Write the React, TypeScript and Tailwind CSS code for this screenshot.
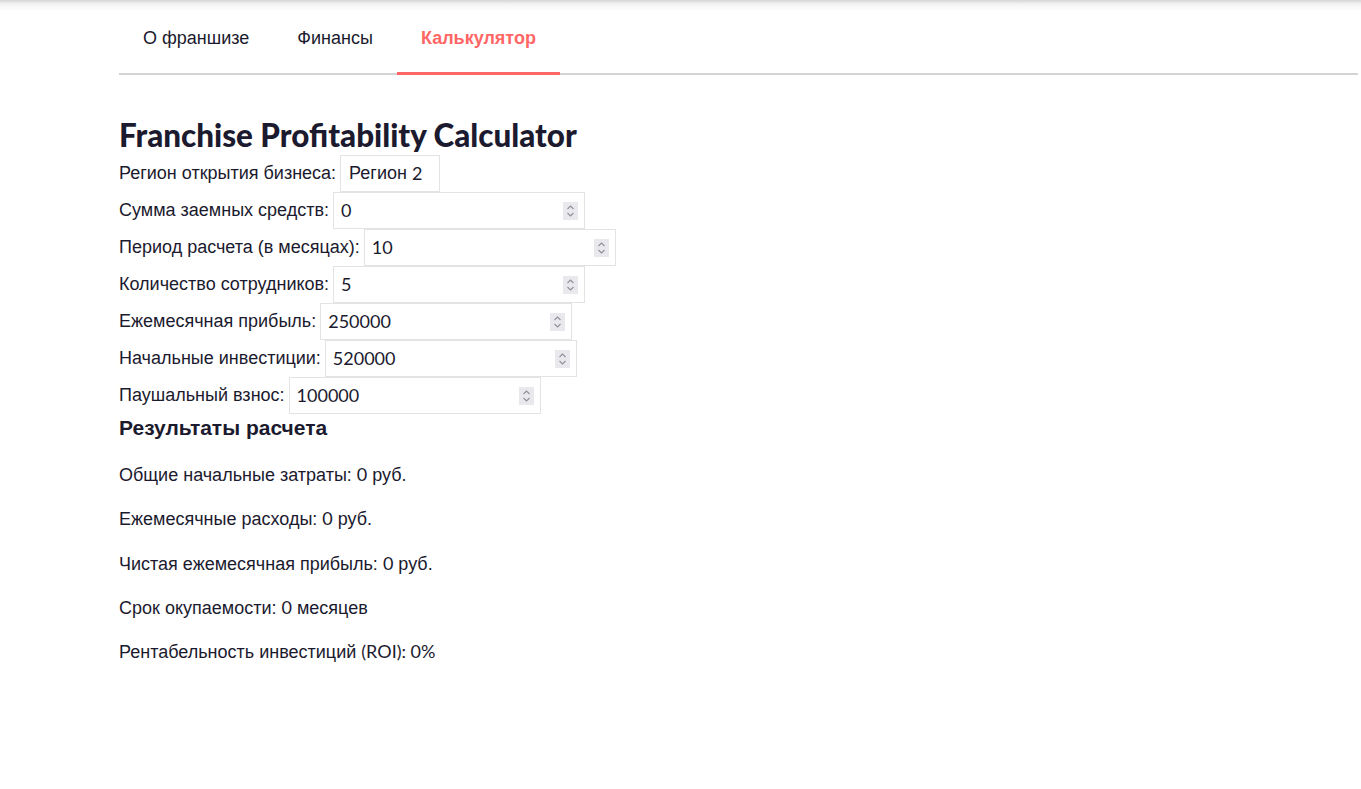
import React from "react";

const NUM = { fontFamily: "Lato, 'Liberation Sans', sans-serif" };

function Spinner() {
  return (
    <div className="mr-[6px] flex h-[18px] w-[15px] shrink-0 items-center justify-center bg-[#e9e9ed]">
      <svg width="9" height="14" viewBox="0 0 9 14" fill="none">
        <path d="M1.5 5 L4.5 2 L7.5 5" stroke="#8f8f9d" strokeWidth="1.1" />
        <path d="M1.5 9 L4.5 12 L7.5 9" stroke="#8f8f9d" strokeWidth="1.1" />
      </svg>
    </div>
  );
}

function NumRow({ label, value }: { label: string; value: string }) {
  return (
    <div className="flex h-[37px] items-center">
      <span className="mr-[4px]">{label}</span>
      <div className="flex h-[37px] w-[252px] items-center border border-[#e3e3e3] bg-white">
        <input
          type="text"
          readOnly
          value={value}
          className="min-w-0 flex-1 bg-transparent pl-[7px] text-[18px] text-[#1b1a2e] outline-none"
          style={NUM}
        />
        <Spinner />
      </div>
    </div>
  );
}

export default function App() {
  const rows = [
    ["Сумма заемных средств:", "0"],
    ["Период расчета (в месяцах):", "10"],
    ["Количество сотрудников:", "5"],
    ["Ежемесячная прибыль:", "250000"],
    ["Начальные инвестиции:", "520000"],
    ["Паушальный взнос:", "100000"],
  ];
  return (
    <div
      className="min-h-[789px] bg-white text-[18px] text-[#1b1a2e]"
      style={{ fontFamily: "'Liberation Sans', Arial, sans-serif" }}
    >
      <div className="bg-[linear-gradient(to_bottom,#d4d4d4_0px,#f3f3f3_4px,#ffffff_11px)]">
        <div className="ml-[119px] mr-[3px] flex border-b-2 border-[#d3d3d3]">
          <div className="-mb-[2px] flex h-[75px] items-center px-[24px] pt-[2px]">О франшизе</div>
          <div className="-mb-[2px] flex h-[75px] items-center px-[24px] pt-[2px]">Финансы</div>
          <div className="-mb-[2px] flex h-[75px] items-center border-b-[3px] border-[#ff6666] px-[24px] pt-[5px] font-bold text-[#ff6666]">
            Калькулятор
          </div>
        </div>
      </div>

      <div className="pl-[119px] pt-[41px]">
        <h1
          className="text-[31.4px] font-black leading-[39px] text-[#1b1a2e]"
          style={{ fontFamily: "Lato, sans-serif" }}
        >
          Franchise Profitability Calculator
        </h1>
        <div className="flex h-[37px] items-center">
          <span className="mr-[4px]">Регион открытия бизнеса:</span>
          <div className="flex h-[37px] w-[100px] items-center border border-[#e3e3e3] pl-[8px]">
            Регион <span className="ml-[5px]" style={NUM}>2</span>
          </div>
        </div>
        {rows.map(([l, v]) => (
          <NumRow key={l} label={l} value={v} />
        ))}
        <h2 className="mt-[2px] text-[21px] font-bold leading-[24px]">Результаты расчета</h2>
        <div className="mt-[24px] flex flex-col gap-[22.25px] leading-[21px]">
          <p>
            Общие начальные затраты: <span style={NUM}>0</span> руб.
          </p>
          <p>
            Ежемесячные расходы: <span style={NUM}>0</span> руб.
          </p>
          <p>
            Чистая ежемесячная прибыль: <span style={NUM}>0</span> руб.
          </p>
          <p>
            Срок окупаемости: <span style={NUM}>0</span> месяцев
          </p>
          <p>
            Рентабельность инвестиций <span style={NUM}>(ROI): 0%</span>
          </p>
        </div>
      </div>
    </div>
  );
}
